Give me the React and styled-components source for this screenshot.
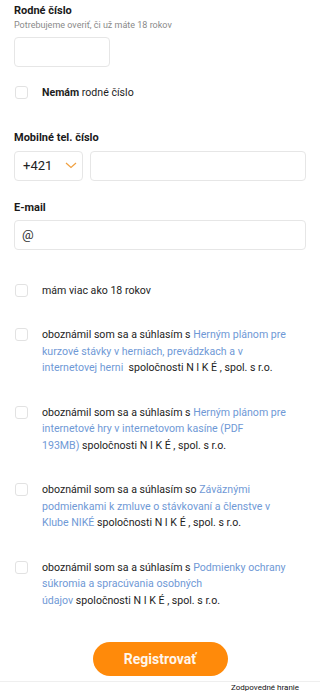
import React, { useState } from 'react'
import styled, { createGlobalStyle } from 'styled-components'

const GlobalStyle = createGlobalStyle`
    body {
        margin: 0;
        background: #fff;
        font-family: Roboto, "Liberation Sans", Arial, sans-serif;
        color: #1d1d1d;
    }
`

const Page = styled.div`
    width: 320px;
    display: flex;
    flex-direction: column;
`

const Form = styled.form`
    display: flex;
    flex-direction: column;
    padding: 4px 14px 0 14px;
`

const Label = styled.div`
    font-size: 11px;
    font-weight: 700;
    line-height: 14px;
    color: #1a1a1a;
    margin-top: ${(p) => p.$top || 0}px;
`

const Hint = styled.div`
    font-size: 9px;
    line-height: 12px;
    color: #8a8a8a;
    margin-top: 1px;
`

const Field = styled.input`
    box-sizing: border-box;
    height: 30px;
    width: ${(p) => p.$width || '100%'};
    flex: ${(p) => (p.$grow ? 1 : 'none')};
    border: 1px solid #e6e6e6;
    border-radius: 4px;
    background: #fff;
    padding: 0 7px;
    font-family: inherit;
    font-size: 13px;
    color: #222;
    outline: none;
    &::placeholder {
        color: #333;
    }
`

const PhoneRow = styled.div`
    display: flex;
    gap: 7px;
    margin-top: 6px;
`

const Prefix = styled.div`
    box-sizing: border-box;
    width: 69px;
    height: 30px;
    border: 1px solid #e6e6e6;
    border-radius: 4px;
    display: flex;
    align-items: center;
    padding-left: 8px;
    gap: 13px;
    font-size: 13px;
    color: #222;
`

const CheckRow = styled.label`
    display: flex;
    align-items: flex-start;
    gap: 14px;
    margin-top: ${(p) => p.$top || 0}px;
    padding-left: 1px;
    font-size: 10.6px;
    line-height: 16.5px;
    color: #1d1d1d;
    cursor: pointer;
`

const Box = styled.span`
    flex: none;
    box-sizing: border-box;
    width: 13px;
    height: 13px;
    margin-top: 1px;
    border: 1px solid #e2e2e2;
    border-radius: 3px;
    background: ${(p) => (p.$on ? '#ff8a00' : '#fff')};
`

const CheckText = styled.span`
    width: 252px;
`

const Strong = styled.b`
    font-weight: 700;
`

const Link = styled.a`
    color: #6f99d6;
    text-decoration: none;
`

const Footer = styled.div`
    display: flex;
    flex-direction: column;
    align-items: center;
    margin-top: 33px;
`

const Submit = styled.button`
    width: 135px;
    height: 34px;
    border: none;
    border-radius: 17px;
    background: #ff8a0a;
    color: #fff6ec;
    font-family: inherit;
    font-size: 14px;
    font-weight: 700;
    cursor: pointer;
`

const Bottom = styled.div`
    width: 100%;
    margin-top: 5px;
    border-top: 1px solid #efefef;
    display: flex;
    justify-content: flex-end;
    padding: 1px 21px 0 0;
    box-sizing: border-box;
    font-size: 8px;
    line-height: 10px;
    color: #111;
`

const Chevron = () => (
    <svg width="12" height="7" viewBox="0 0 12 7" fill="none">
        <path d="M1 1l5 4.5L11 1" stroke="#f0a040" strokeWidth="1.2" />
    </svg>
)

const Check = ({ top, children }) => {
    const [on, setOn] = useState(false)
    return (
        <CheckRow $top={top} onClick={() => setOn(!on)}>
            <Box $on={on} />
            <CheckText>{children}</CheckText>
        </CheckRow>
    )
}

const NIKE = () => <>spoločnosti N I K É , spol. s r.o.</>

export default function App() {
    return (
        <Page>
            <GlobalStyle />
            <Form onSubmit={(e) => e.preventDefault()}>
                <Label>Rodné číslo</Label>
                <Hint>Potrebujeme overiť, či už máte 18 rokov</Hint>
                <Field $width="96px" style={{ marginTop: 6 }} />

                <Check top={18}>
                    <Strong>Nemám</Strong> rodné číslo
                </Check>

                <Label $top={29}>Mobilné tel. číslo</Label>
                <PhoneRow>
                    <Prefix>
                        +421
                        <Chevron />
                    </Prefix>
                    <Field $grow />
                </PhoneRow>

                <Label $top={20}>E-mail</Label>
                <Field placeholder="@" style={{ marginTop: 5 }} />

                <Check top={33}>mám viac ako 18 rokov</Check>

                <Check top={28}>
                    oboznámil som sa a súhlasím s <Link href="#">Herným plánom pre kurzové stávky v herniach, prevádzkach a v internetovej herni</Link>&nbsp; <NIKE />
                </Check>

                <Check top={28}>
                    oboznámil som sa a súhlasím s <Link href="#">Herným plánom pre internetové hry v internetovom kasíne (PDF<br />193MB)</Link> <NIKE />
                </Check>

                <Check top={28}>
                    oboznámil som sa a súhlasím so <Link href="#">Záväznými podmienkami k zmluve o stávkovaní a členstve v Klube NIKÉ</Link> <NIKE />
                </Check>

                <Check top={28}>
                    oboznámil som sa a súhlasím s <Link href="#">Podmienky ochrany súkromia a spracúvania osobných<br />údajov</Link> <NIKE />
                </Check>
            </Form>
            <Footer>
                <Submit type="submit">Registrovať</Submit>
                <Bottom>Zodpovedné hranie</Bottom>
            </Footer>
        </Page>
    )
}
